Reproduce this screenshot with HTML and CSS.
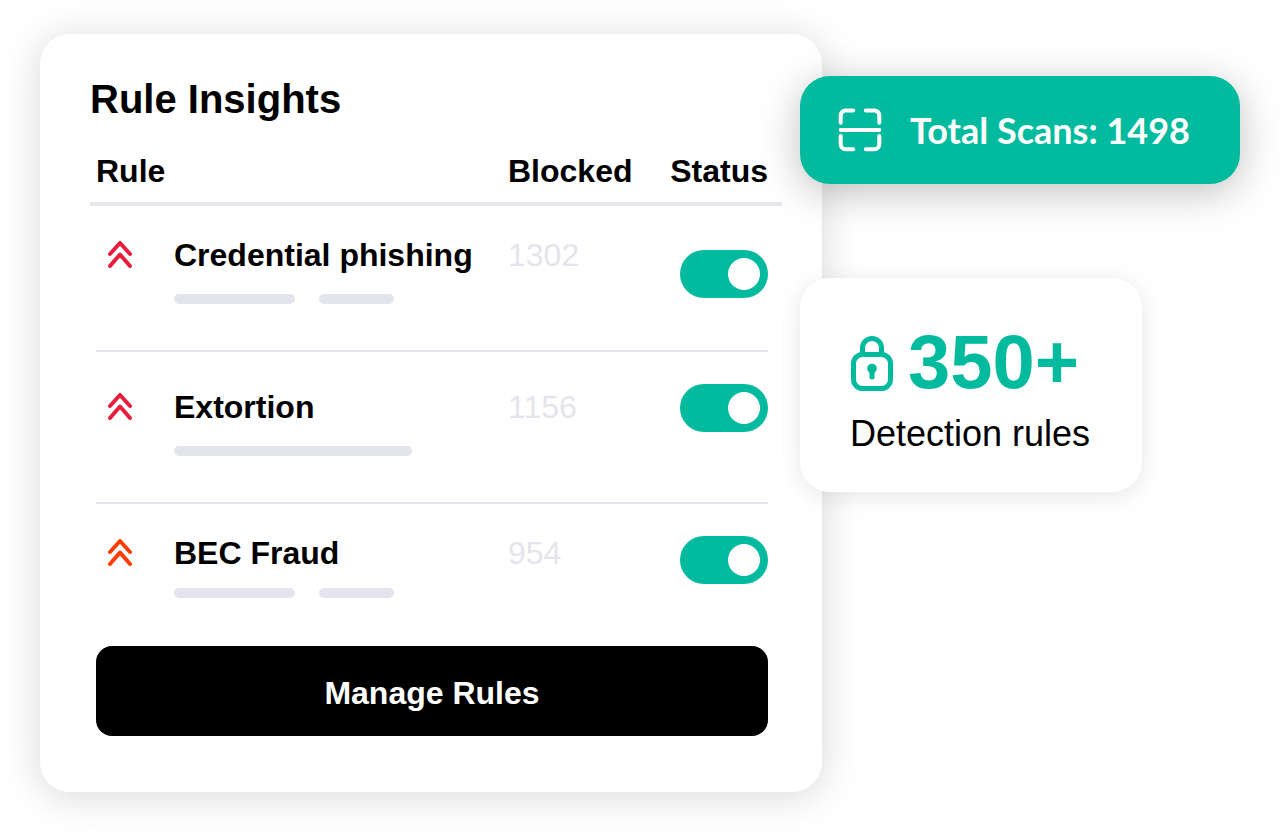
FILE: index.html
```
<!DOCTYPE html>
<html lang="en">
  <head>
    <meta charset="UTF-8" />
    <meta name="viewport" content="width=device-width, initial-scale=1.0" />
    <title>Rule Insights</title>
    <link rel="stylesheet" href="styles.css">
  </head>
  <body>
    <main class="dashboard">
      <section class="card insights">
        <h1>Rule Insights</h1>
        <table class="rules">
          <thead>
            <tr>
              <th scope="col">Rule</th>
              <th scope="col">Blocked</th>
              <th scope="col" class="status">Status</th>
            </tr>
          </thead>
          <tbody>
            <tr class="row-phishing">
              <td class="rule">
                <svg class="severity high" viewBox="0 0 24 28" aria-hidden="true">
                  <path d="M2 13 12 2 22 13M2 25 12 13.5 22 25" />
                </svg>
                <div class="details">
                  <label for="phishing">Credential phishing</label>
                  <div class="lines">
                    <span class="line medium"></span>
                    <span class="line short"></span>
                  </div>
                </div>
              </td>
              <td class="blocked">1302</td>
              <td class="status">
                <input type="checkbox" class="toggle" id="phishing" checked />
              </td>
            </tr>
            <tr class="row-extortion">
              <td class="rule">
                <svg class="severity high" viewBox="0 0 24 28" aria-hidden="true">
                  <path d="M2 13 12 2 22 13M2 25 12 13.5 22 25" />
                </svg>
                <div class="details">
                  <label for="extortion">Extortion</label>
                  <div class="lines">
                    <span class="line long"></span>
                  </div>
                </div>
              </td>
              <td class="blocked">1156</td>
              <td class="status">
                <input type="checkbox" class="toggle" id="extortion" checked />
              </td>
            </tr>
            <tr class="row-fraud">
              <td class="rule">
                <svg class="severity elevated" viewBox="0 0 24 28" aria-hidden="true">
                  <path d="M2 13 12 2 22 13M2 25 12 13.5 22 25" />
                </svg>
                <div class="details">
                  <label for="fraud">BEC Fraud</label>
                  <div class="lines">
                    <span class="line medium"></span>
                    <span class="line short"></span>
                  </div>
                </div>
              </td>
              <td class="blocked">954</td>
              <td class="status">
                <input type="checkbox" class="toggle" id="fraud" checked />
              </td>
            </tr>
          </tbody>
        </table>
        <button type="button" class="manage-button">Manage Rules</button>
      </section>

      <aside class="stats">
        <div class="card scans">
          <svg class="scan-icon" viewBox="0 0 44 44" aria-hidden="true">
            <path d="M2.700 14.700V7.500a5 5 0 0 1 5-5h7.500M27.800 2.500h8.500a5 5 0 0 1 5 5v7.200M41.300 28v8.300a5 5 0 0 1-5 5h-8.500M15.200 41.300H7.700a5 5 0 0 1-5-5V28M2.700 22h38.600" />
          </svg>
          <span>Total Scans: 1498</span>
        </div>
        <div class="card detection">
          <div class="count">
            <svg class="lock-icon" viewBox="0 0 44 60" aria-hidden="true">
              <rect x="3.500" y="22.500" width="37" height="34" rx="9" />
              <path d="M12.500 22.500v-6.500a9.500 9.500 0 0 1 19 0v6.500" />
              <circle class="keyhole" cx="22" cy="36.500" r="4.800" />
              <path class="slot" d="M22 37v8" />
            </svg>
            <strong>350+</strong>
          </div>
          <p>Detection rules</p>
        </div>
      </aside>
    </main>
  </body>
</html>
```
FILE: styles.css
```
* {
  box-sizing: border-box;
}

body {
  margin: 0;
  background-color: #ffffff;
  color: #000000;
  font-family: "Liberation Sans", Arial, sans-serif;
  font-size: 32px;
  line-height: 36px;
}

.dashboard {
  display: flex;
  align-items: flex-start;
  padding: 34px 40px 46px;
}

.card {
  background-color: #ffffff;
  border-radius: 30px;
}

.insights {
  flex: 1;
  padding: 42px 40px 56px 50px;
  box-shadow: 0 4px 40px rgba(0, 0, 0, 0.16);
}

h1 {
  margin: 0 0 31px;
  font-size: 40px;
  line-height: 46px;
}

.rules,
.rules thead,
.rules tbody {
  display: block;
}

.rules tr {
  display: grid;
  grid-template-columns: 1fr 124px 136px;
}

.rules thead tr {
  padding: 0 14px 13px 6px;
  border-bottom: 4px solid #e6e8ee;
}

.rules tbody {
  margin: 0 14px 0 6px;
}

.rules th,
.rules td {
  padding: 0;
  text-align: left;
}

.rules .status {
  text-align: right;
}

.rules tbody tr {
  --text-top: 31px;
  --toggle-top: 32px;
  --line-gap: 21px;
  padding-bottom: 46px;
  border-bottom: 2px solid #e4e4ed;
}

.rules .row-phishing {
  --toggle-top: 44px;
}

.rules .row-extortion {
  --text-top: 37px;
}

.rules .row-fraud {
  --line-gap: 17px;
  padding-bottom: 48px;
  border-bottom: none;
}

.rules .rule {
  display: flex;
  gap: 42px;
  padding: var(--text-top) 0 0 12px;
}

.rules .blocked {
  padding-top: var(--text-top);
  color: #e4e4ed;
}

.rules td.status {
  display: flex;
  justify-content: flex-end;
  align-items: flex-start;
  padding-top: var(--toggle-top);
}

.severity {
  width: 24px;
  height: 28px;
  margin-top: 4px;
  fill: none;
  stroke-width: 4;
  stroke-linecap: round;
  stroke-linejoin: round;
}

.severity.high {
  stroke: #ea1d3d;
}

.severity.elevated {
  stroke: #ff3d00;
}

.details label {
  display: block;
  font-weight: bold;
}

.lines {
  display: flex;
  gap: 24px;
  margin-top: var(--line-gap);
}

.line {
  height: 10px;
  border-radius: 5px;
  background-color: #e4e4ed;
}

.line.short {
  width: 75px;
}

.line.medium {
  width: 121px;
}

.line.long {
  width: 238px;
}

.toggle {
  appearance: none;
  width: 88px;
  height: 48px;
  margin: 0;
  padding: 8px;
  border-radius: 24px;
  background-color: #c4c4cf;
  cursor: pointer;
}

.toggle::before {
  content: "";
  display: block;
  width: 32px;
  height: 32px;
  border-radius: 50%;
  background-color: #ffffff;
}

.toggle:checked {
  background-color: #02bb9e;
}

.toggle:checked::before {
  margin-left: auto;
}

.manage-button {
  display: block;
  width: calc(100% - 20px);
  height: 90px;
  margin: 0 14px 0 6px;
  padding: 4px 0 0;
  border: none;
  border-radius: 16px;
  background-color: #000000;
  color: #ffffff;
  font: inherit;
  font-weight: bold;
  cursor: pointer;
}

.stats {
  display: flex;
  flex-direction: column;
  align-items: flex-start;
  gap: 94px;
  width: 440px;
  margin: 42px 0 0 -22px;
}

.scans {
  display: flex;
  align-items: center;
  gap: 28px;
  width: 100%;
  height: 108px;
  padding: 0 38px;
  background-color: #02bb9e;
  color: #ffffff;
  font-family: Lato, sans-serif;
  font-size: 36px;
  font-weight: bold;
  white-space: nowrap;
  box-shadow: 0 8px 40px rgba(0, 0, 0, 0.25);
}

.scan-icon {
  flex: none;
  width: 44px;
  height: 44px;
  fill: none;
  stroke: #ffffff;
  stroke-width: 4;
  stroke-linecap: round;
}

.detection {
  min-width: 342px;
  padding: 40px 50px 37px;
  box-shadow: 0 4px 24px rgba(0, 0, 0, 0.1);
}

.count {
  display: flex;
  align-items: center;
  gap: 14px;
  color: #02bb9e;
  font-size: 76px;
  line-height: 88px;
}

.lock-icon {
  width: 44px;
  height: 60px;
  fill: none;
  stroke: #02bb9e;
  stroke-width: 5;
}

.lock-icon .keyhole {
  fill: #02bb9e;
  stroke: none;
}

.lock-icon .slot {
  stroke-width: 5;
  stroke-linecap: round;
}

.detection p {
  margin: 7px 0 0;
  font-size: 36px;
  line-height: 42px;
}
```
